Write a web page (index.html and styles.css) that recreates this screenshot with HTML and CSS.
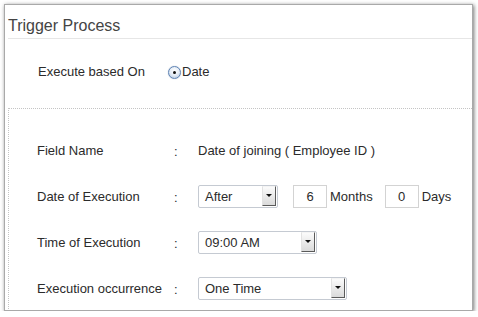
FILE: index.html
```html
<!DOCTYPE html>
<html lang="en">
<head>
    <meta charset="UTF-8">
    <title>Trigger Process</title>
    <link rel="stylesheet" href="styles.css">
</head>
<body>
    <div class="window">
        <div class="window-title">Trigger Process</div>

        <div class="based-on">
            <span class="based-label">Execute based On</span>
            <label class="radio-option">
                <span class="radio checked"></span>
                <span>Date</span>
            </label>
        </div>

        <div class="criteria">
            <div class="field-row">
                <div class="field-label">Field Name</div>
                <div class="field-colon">:</div>
                <div class="field-value">Date of joining ( Employee ID )</div>
            </div>

            <div class="field-row">
                <div class="field-label">Date of Execution</div>
                <div class="field-colon">:</div>
                <div class="field-value">
                    <div class="select select-short">
                        <span class="select-text">After</span>
                        <span class="select-button"></span>
                    </div>
                    <div class="num-input input-months">6</div>
                    <span class="unit">Months</span>
                    <div class="num-input input-days">0</div>
                    <span class="unit">Days</span>
                </div>
            </div>

            <div class="field-row">
                <div class="field-label">Time of Execution</div>
                <div class="field-colon">:</div>
                <div class="field-value">
                    <div class="select select-time">
                        <span class="select-text">09:00 AM</span>
                        <span class="select-button"></span>
                    </div>
                </div>
            </div>

            <div class="field-row">
                <div class="field-label">Execution occurrence</div>
                <div class="field-colon">:</div>
                <div class="field-value">
                    <div class="select select-long">
                        <span class="select-text">One Time</span>
                        <span class="select-button"></span>
                    </div>
                </div>
            </div>
        </div>
    </div>
</body>
</html>
```

FILE: styles.css
```css
:root {
    --text: #2b2b2b;
    --title: #444;
    --line: #e6e6e6;
    --dots: #c4c4c4;
    --field-border: #c5cad2;
}

body {
    margin: 0;
    background: #fff;
    font-family: 'Liberation Sans', Arial, sans-serif;
    font-size: 13px;
    color: var(--text);
}

.window {
    margin: 4px 0 0 4px;
    width: 467px;
    height: 305px;
    border: 1px solid #a9a9a9;
    box-shadow: 1px 1px 4px rgba(0, 0, 0, 0.55);
    background: #fff;
    overflow: hidden;
}

.window-title {
    margin-left: 3px;
    padding: 11px 0 2px 0;
    line-height: 20px;
    font-size: 16px;
    color: var(--title);
    border-bottom: 1px solid var(--line);
}

.based-on {
    display: flex;
    align-items: center;
    padding: 25px 0 28px 33px;
    line-height: 16px;
}

.based-label {
    width: 130px;
}

.radio-option {
    display: flex;
    align-items: center;
    gap: 1px;
}

.radio {
    width: 11px;
    height: 11px;
    border-radius: 50%;
    border: 1px solid #5f84b4;
    background: radial-gradient(circle at 50% 35%, #ffffff 0%, #e4ecf6 50%, #a9c0dc 100%);
    box-shadow: 0 0 1px rgba(60, 90, 140, 0.5);
    display: flex;
    align-items: center;
    justify-content: center;
}

.radio.checked::after {
    content: "";
    width: 3px;
    height: 3px;
    border-radius: 50%;
    background: #111;
}

.criteria {
    margin-left: 3px;
    height: 200px;
    border-top: 1px dotted var(--dots);
    border-left: 1px dotted var(--dots);
    padding-top: 18px;
}

.field-row {
    display: flex;
    align-items: center;
    height: 46px;
    padding-left: 28px;
}

.field-label {
    width: 137px;
}

.field-colon {
    width: 24px;
    padding-top: 3px;
}

.field-value {
    display: flex;
    align-items: center;
}

.select {
    box-sizing: border-box;
    height: 23px;
    border: 1px solid var(--field-border);
    border-radius: 2px;
    display: flex;
    align-items: center;
    justify-content: space-between;
    padding: 1px 1px 1px 6px;
    background: #fff;
}

.select-short { width: 80px; }
.select-time { width: 119px; }
.select-long { width: 149px; }

.select-button {
    box-sizing: border-box;
    width: 14px;
    height: 20px;
    border: 1px solid;
    border-color: #f4f4f4 #5a5a5a #5a5a5a #e2e2e2;
    background: linear-gradient(#fbfbfb, #dadada);
    display: flex;
    align-items: center;
    justify-content: center;
}

.select-button::after {
    content: "";
    border-left: 3px solid transparent;
    border-right: 3px solid transparent;
    border-top: 3px solid #111;
    margin-top: -1px;
}

.num-input {
    box-sizing: border-box;
    width: 34px;
    height: 23px;
    border: 1px solid #d3d3d3;
    text-align: center;
    line-height: 21px;
}

.input-months { margin-left: 15px; }
.input-days { margin-left: 12px; }

.unit {
    margin-left: 3px;
}
```
